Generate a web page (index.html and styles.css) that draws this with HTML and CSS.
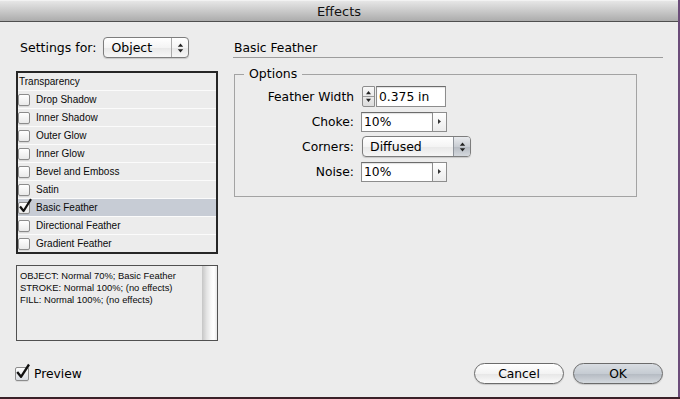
FILE: index.html
```html
<!DOCTYPE html>
<html lang="en">
<head>
    <meta charset="UTF-8">
    <title>Effects</title>
    <link rel="stylesheet" href="styles.css">
</head>
<body>
    <div class="window">
      <div class="titlebar">Effects</div>

      <div class="main">
        <!-- Left column: target + effect list + summary -->
        <div class="left">
          <div class="settings-row">
            <span class="settings-label">Settings for:</span>
            <div class="popup popup-object">
              <span class="popup-label">Object</span>
              <span class="popup-arrows">
                <svg width="7" height="10" viewBox="0 0 7 10"><path d="M3.5 0.5 L6.2 3.8 H0.8 Z M0.8 6.2 H6.2 L3.5 9.5 Z" fill="#222"/></svg>
              </span>
            </div>
          </div>

          <ul class="effect-list">
            <li class="effect-row">Transparency</li>
            <li class="effect-row"><span class="check"></span>Drop Shadow</li>
            <li class="effect-row"><span class="check"></span>Inner Shadow</li>
            <li class="effect-row"><span class="check"></span>Outer Glow</li>
            <li class="effect-row"><span class="check"></span>Inner Glow</li>
            <li class="effect-row"><span class="check"></span>Bevel and Emboss</li>
            <li class="effect-row"><span class="check"></span>Satin</li>
            <li class="effect-row selected"><span class="check">
              <svg class="tick" width="15" height="15" viewBox="0 0 15 15"><path d="M2 8.5 L5.6 13 L13 1.2" fill="none" stroke="#111" stroke-width="2.2" stroke-linejoin="round"/></svg>
            </span>Basic Feather</li>
            <li class="effect-row"><span class="check"></span>Directional Feather</li>
            <li class="effect-row"><span class="check"></span>Gradient Feather</li>
          </ul>

          <div class="summary">
            <div class="summary-text">
              OBJECT: Normal 70%; Basic Feather<br>
              STROKE: Normal 100%; (no effects)<br>
              FILL: Normal 100%; (no effects)
            </div>
            <div class="scrollbar"></div>
          </div>
        </div>

        <!-- Right column: Basic Feather options -->
        <div class="right">
          <h2 class="section-title">Basic Feather</h2>
          <fieldset class="options">
            <legend>Options</legend>
            <div class="options-grid">
              <label class="opt-label">Feather Width</label>
              <div class="spin-field">
                <span class="spinner">
                  <svg width="11" height="19" viewBox="0 0 11 19"><path d="M5.5 4 L8 7.2 H3 Z M3 11.8 H8 L5.5 15 Z" fill="#222"/><path d="M0 9.5 H11" stroke="#9a9a9a" stroke-width="1"/></svg>
                </span>
                <input class="text-input feather-input" type="text" value="0.375 in">
              </div>

              <label class="opt-label">Choke:</label>
              <div class="num-field">
                <input class="text-input num-input" type="text" value="10%">
                <span class="arrow-btn">
                  <svg width="5" height="7" viewBox="0 0 5 7"><path d="M1 1 L4 3.5 L1 6 Z" fill="#333"/></svg>
                </span>
              </div>

              <label class="opt-label">Corners:</label>
              <div class="popup popup-corners">
                <span class="popup-label">Diffused</span>
                <span class="popup-arrows">
                  <svg width="7" height="10" viewBox="0 0 7 10"><path d="M3.5 0.5 L6.2 3.8 H0.8 Z M0.8 6.2 H6.2 L3.5 9.5 Z" fill="#222"/></svg>
                </span>
              </div>

              <label class="opt-label">Noise:</label>
              <div class="num-field">
                <input class="text-input num-input" type="text" value="10%">
                <span class="arrow-btn">
                  <svg width="5" height="7" viewBox="0 0 5 7"><path d="M1 1 L4 3.5 L1 6 Z" fill="#333"/></svg>
                </span>
              </div>
            </div>
          </fieldset>
        </div>
      </div>

      <div class="footer">
        <div class="preview">
          <span class="check preview-check">
            <svg class="tick" width="16" height="16" viewBox="0 0 16 16"><path d="M2.2 9 L6 13.8 L14 1.5" fill="none" stroke="#111" stroke-width="2.3" stroke-linejoin="round"/></svg>
          </span>
          <span>Preview</span>
        </div>
        <div class="buttons">
          <button class="btn btn-cancel">Cancel</button>
          <button class="btn btn-ok">OK</button>
        </div>
      </div>
    </div>
</body>
</html>
```

FILE: styles.css
```css
/* General */
* {
    box-sizing: border-box;
}

body {
    margin: 0;
    width: 680px;
    height: 399px;
    overflow: hidden;
    font-family: "DejaVu Sans", sans-serif;
    color: #000;
    background: linear-gradient(to bottom, #6b4b79 397px, #3b2129 397px); /* desktop peeking out */
}

.window {
    width: 678px;
    height: 397px;
    background: #ececec;
}

.titlebar {
    height: 22px;
    line-height: 21px;
    text-align: center;
    font-size: 13px;
    color: #111;
    background: linear-gradient(#e6e6e6, #cfcfcf 40%, #acacac);
    border-bottom: 1px solid #4f4f4f;
    border-top: 1px solid #f2f2f2;
}

.main {
    display: flex;
    gap: 15px;
    padding: 15px 15px 0 16px;
}

/* Left column */
.left {
    width: 202px;
}

.settings-row {
    display: flex;
    align-items: center;
    height: 21px;
}

.settings-label {
    margin-left: 4px;
    margin-right: 7px;
    font-size: 12.5px;
}

.popup {
    display: flex;
    align-items: center;
    height: 21px;
    border: 1px solid #7d7d7d;
    border-radius: 4px;
    background: linear-gradient(#ffffff, #f4f4f4 50%, #e8e8e8 52%, #f6f6f6);
    box-shadow: 0 1px 1px rgba(0, 0, 0, 0.15);
    font-size: 12.5px;
}

.popup-label {
    flex: 1;
    padding-left: 7px;
}

.popup-arrows {
    align-self: stretch;
    width: 17px;
    display: flex;
    align-items: center;
    justify-content: center;
    border-left: 1px solid #a9a9a9;
}

.popup-object {
    width: 86px;
}

.effect-list {
    list-style: none;
    margin: 13px 0 0;
    padding: 0;
    border: 2px solid #262626;
    background: #ececec;
}

.effect-row {
    display: flex;
    align-items: center;
    gap: 6px;
    height: 18px;
    padding-left: 1px;
    border-bottom: 1px solid #fbfbfb;
    font-family: "Liberation Sans", sans-serif;
    font-size: 10px;
    color: #0a0a0a;
}

.effect-row:last-child {
    height: 17px;
    border-bottom: none;
}

.effect-row.selected {
    background: #c7ccd5;
}

.check {
    position: relative;
    flex: none;
    width: 12px;
    height: 12px;
    margin-left: -1px;
    border: 1px solid #8c8c8c;
    border-radius: 2px;
    background: linear-gradient(#ffffff, #e9e9e9);
    box-shadow: 0 1px 0 rgba(0, 0, 0, 0.08);
}

.tick {
    position: absolute;
    left: -1px;
    top: -5px;
}

.summary {
    display: flex;
    height: 76px;
    margin-top: 11px;
    border: 1px solid #505050;
}

.summary-text {
    flex: 1;
    padding: 4px 0 0 3px;
    font-family: "Liberation Sans", sans-serif;
    font-size: 9.4px;
    line-height: 12px;
    color: #0a0a0a;
}

.scrollbar {
    width: 15px;
    background: linear-gradient(to right, #c6c6c6, #e3e3e3 30%, #f8f8f8 60%, #ffffff 80%, #e6e6e6);
}

/* Right column */
.right {
    width: 430px;
}

.section-title {
    margin: 0;
    padding: 3px 0 0 1px;
    font-size: 12.3px;
    font-weight: normal;
    line-height: 17px;
    border-bottom: 1px solid #9c9c9c;
}

.options {
    width: 403px;
    margin: 9px 0 0 1px;
    padding: 5px 0 14px 0;
    border: 1px solid #a3a3a3;
    min-width: 0;
}

.options legend {
    margin-left: 9px;
    padding: 0 5px;
    font-size: 12.5px;
    line-height: 14px;
}

.options-grid {
    display: grid;
    grid-template-columns: 119px max-content;
    grid-auto-rows: 21px;
    column-gap: 7px;
    row-gap: 4px;
    align-items: center;
}

.opt-label {
    text-align: right;
    font-size: 12.3px;
}

.text-input {
    height: 21px;
    margin: 0;
    padding: 0 2px;
    border: 1px solid #8d8d8d;
    border-top-color: #6c6c6c;
    background: #fff;
    box-shadow: inset 0 1px 1px rgba(0, 0, 0, 0.12);
    font-family: "DejaVu Sans", sans-serif;
    font-size: 12.3px;
    color: #000;
    outline: none;
}

.spin-field {
    display: flex;
    margin-left: 1px;
}

.spinner {
    width: 13px;
    height: 21px;
    border: 1px solid #8d8d8d;
    border-radius: 2px 0 0 2px;
    background: linear-gradient(#f8f8f8, #dcdcdc);
    line-height: 0;
}

.feather-input {
    width: 70px;
    margin-left: 1px;
}

.num-field {
    display: flex;
    height: 20px;
}

.num-input {
    width: 72px;
    height: 20px;
}

.arrow-btn {
    width: 14px;
    height: 20px;
    display: flex;
    align-items: center;
    justify-content: center;
    border: 1px solid #8d8d8d;
    border-left: none;
    background: linear-gradient(#ffffff, #ececec);
}

.popup-corners {
    width: 109px;
    margin-left: 1px;
}

.popup-corners .popup-arrows {
    border-radius: 0 3px 3px 0;
    border-left-color: #8f949b;
    background: linear-gradient(#e8eaed, #c9cdd3 50%, #b6bbc2 52%, #d4d8dd);
}

/* Footer */
.footer {
    display: flex;
    justify-content: space-between;
    align-items: center;
    height: 21px;
    margin-top: 22px;
    padding: 0 15px;
}

.preview {
    display: flex;
    align-items: center;
    gap: 5px;
    font-size: 12.3px;
}

.preview-check {
    width: 14px;
    height: 14px;
    margin-left: 0;
    background: linear-gradient(#fdfdfd, #d9dde3);
}

.buttons {
    display: flex;
    gap: 9px;
}

.btn {
    width: 90px;
    height: 21px;
    padding: 0;
    border: 1px solid #6b6b6b;
    border-radius: 11px;
    font-family: "DejaVu Sans", sans-serif;
    font-size: 12.3px;
    color: #000;
    box-shadow: 0 1px 1px rgba(0, 0, 0, 0.15);
}

.btn-cancel {
    background: linear-gradient(#ffffff, #f3f3f3 50%, #e6e6e6 52%, #fbfbfb);
}

.btn-ok {
    background: linear-gradient(#d9dde2, #c6ccd3 50%, #b4bac2 52%, #d4d9de);
}
```
